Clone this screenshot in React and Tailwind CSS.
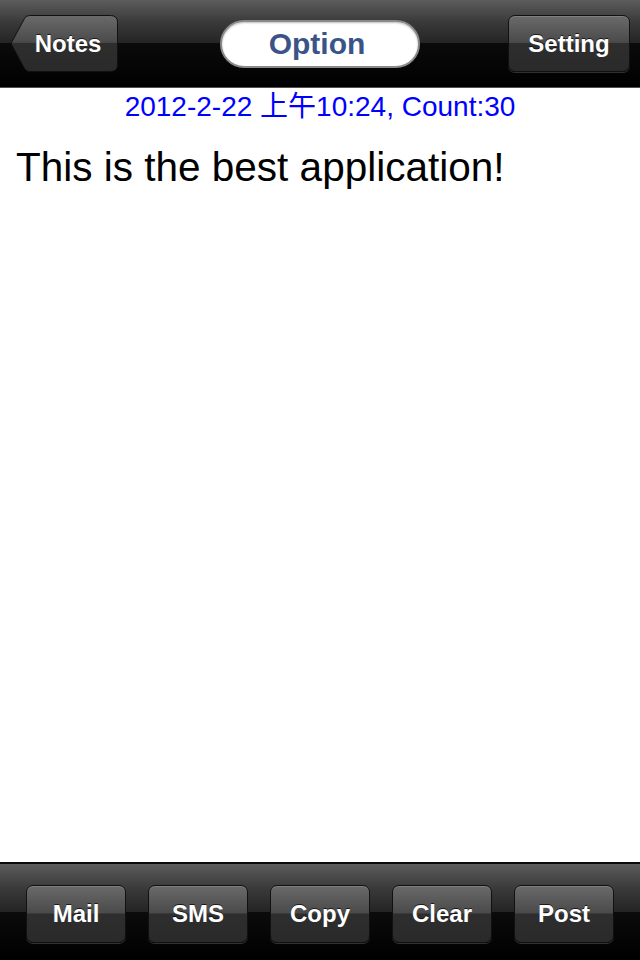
import React from "react";

const btnBg =
  "bg-[linear-gradient(to_bottom,#6a6a6a_0%,#4a4a4a_48%,#2e2e2e_50%,#2a2a2a_100%)]";
const barBg =
  "bg-[linear-gradient(to_bottom,#5c5c5c_0%,#3a3a3a_25%,#242424_50%,#0b0b0b_50%,#000000_100%)]";

function BarButton({ children, className = "" }) {
  return (
    <div
      className={`flex items-center justify-center rounded-[7px] border border-[#111] ${btnBg} shadow-[0_1px_0_rgba(255,255,255,0.18),inset_0_1px_0_rgba(255,255,255,0.15)] text-white font-bold text-[24px] [text-shadow:0_-1px_0_rgba(0,0,0,0.7)] ${className}`}
    >
      {children}
    </div>
  );
}

function BackButton() {
  return (
    <div className="relative w-[108px] h-[57px] flex items-center justify-center pl-[8px] text-white font-bold text-[24px] [text-shadow:0_-1px_0_rgba(0,0,0,0.7)]">
      <svg className="absolute inset-0" width="108" height="57" viewBox="0 0 108 57">
        <defs>
          <linearGradient id="bg" x1="0" y1="0" x2="0" y2="1">
            <stop offset="0" stopColor="#6a6a6a" />
            <stop offset="0.48" stopColor="#4a4a4a" />
            <stop offset="0.5" stopColor="#2e2e2e" />
            <stop offset="1" stopColor="#2a2a2a" />
          </linearGradient>
        </defs>
        <path
          d="M1 28.5 L14.5 3.5 Q16 0.5 19.5 0.5 L100.5 0.5 Q107.5 0.5 107.5 7.5 L107.5 49.5 Q107.5 56.5 100.5 56.5 L19.5 56.5 Q16 56.5 14.5 53.5 Z"
          fill="url(#bg)"
          stroke="#111"
          strokeWidth="1"
        />
      </svg>
      <span className="relative">Notes</span>
    </div>
  );
}

export default function App() {
  return (
    <div className="w-[640px] h-[960px] flex flex-col bg-white font-['Liberation_Sans','Noto_Sans_CJK_SC',sans-serif]">
      <header className={`h-[88px] shrink-0 border-b border-[#505050] ${barBg} grid grid-cols-[1fr_auto_1fr] items-center px-[10px]`}>
        <div className="flex justify-start">
          <BackButton />
        </div>
        <div className="w-[200px] h-[48px] rounded-full bg-white border-2 border-[#8a8a8a] shadow-[inset_0_1px_2px_rgba(0,0,0,0.25)] flex items-center justify-center pr-[6px] text-[#3b5487] font-bold text-[30px]">
          Option
        </div>
        <div className="flex justify-end">
          <BarButton className="w-[122px] h-[57px]">Setting</BarButton>
        </div>
      </header>
      <main className="flex-1 flex flex-col">
        <div className="text-center text-[#0000ff] text-[28px] leading-[32px] mt-[3px]">
          2012-2-22 上午10:24, Count:30
        </div>
        <div className="text-black text-[40.5px] leading-[46px] mt-[21px] pl-[16px]">
          This is the best application!
        </div>
      </main>
      <footer className={`h-[98px] shrink-0 border-t-2 border-[#0a0a0a] ${barBg} flex items-start justify-center gap-[22px] pt-[21px]`}>
        {["Mail", "SMS", "Copy", "Clear", "Post"].map((t) => (
          <BarButton key={t} className="w-[100px] h-[58px]">
            {t}
          </BarButton>
        ))}
      </footer>
    </div>
  );
}
